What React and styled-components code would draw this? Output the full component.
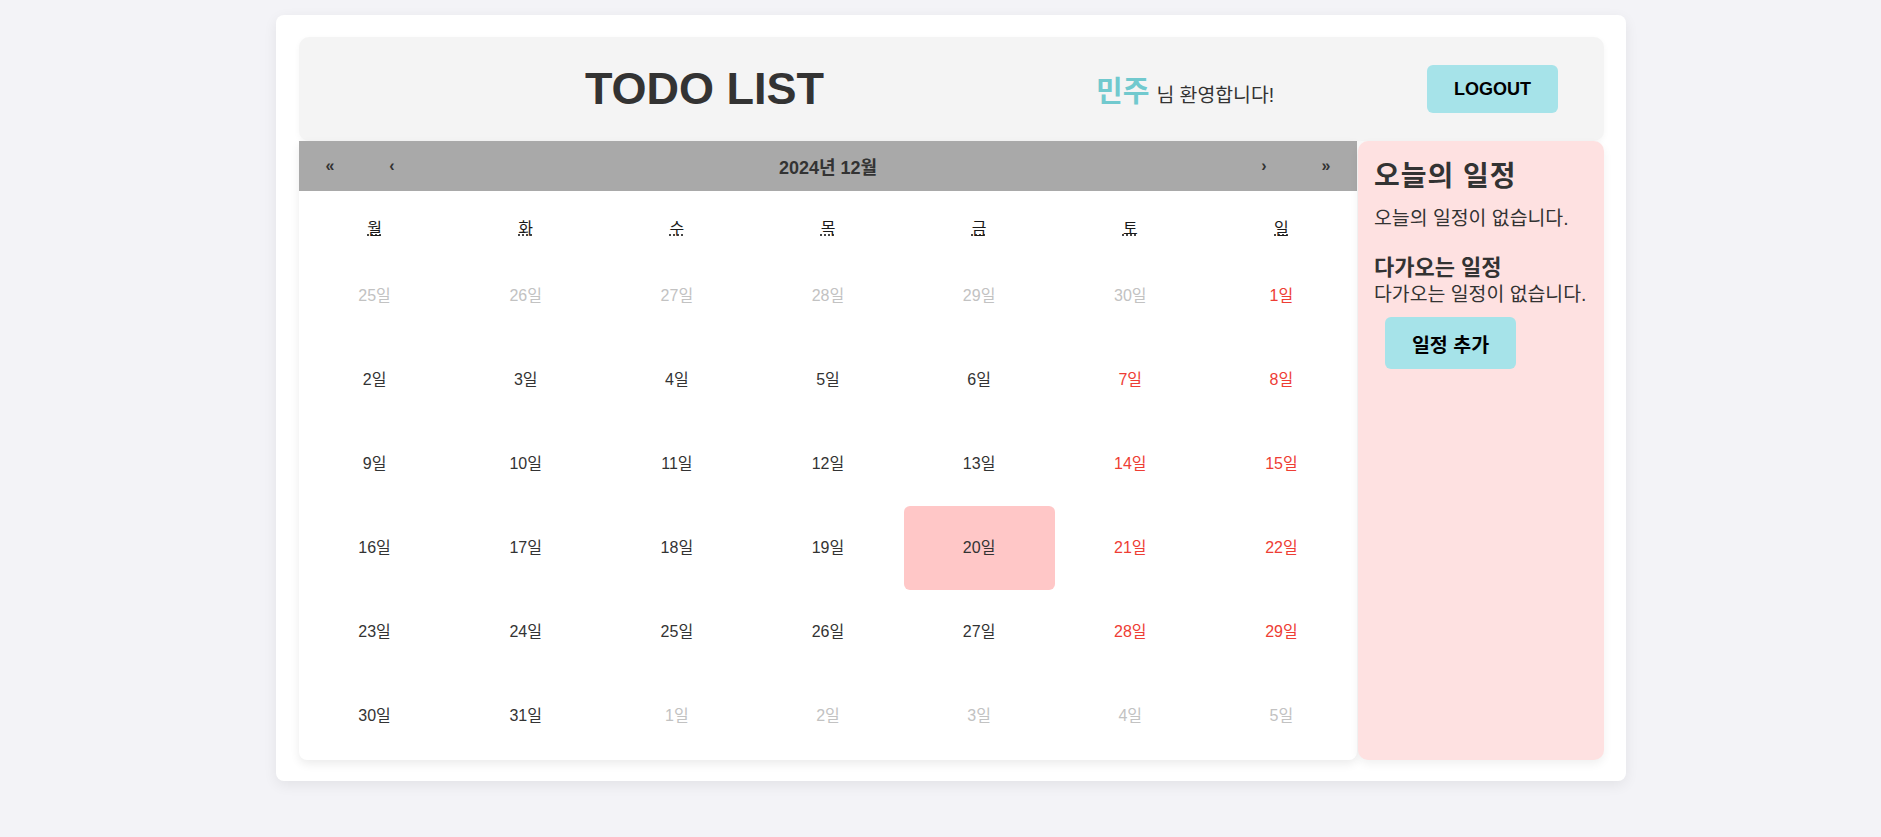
import React from "react";
import styled, { createGlobalStyle } from "styled-components";

const GlobalStyle = createGlobalStyle`
  html, body {
    margin: 0;
    padding: 0;
    background: #f3f3f7;
    font-family: "Liberation Sans", "Noto Sans CJK KR", Arial, sans-serif;
    color: #333;
  }
  * { box-sizing: border-box; }
`;

const Page = styled.div`
  display: flex;
  justify-content: center;
  align-items: flex-start;
  padding: 15px 0 0 21px;
  min-height: 837px;
`;

const Card = styled.div`
  width: 1350px;
  background: #fff;
  border-radius: 8px;
  padding: 22px 22px 21px 23px;
  box-shadow: 0 4px 14px rgba(0, 0, 0, 0.07);
`;

const Header = styled.header`
  height: 104px;
  display: flex;
  align-items: center;
  background: #f4f4f4;
  border-radius: 10px;
  box-shadow: 0 2px 6px rgba(0, 0, 0, 0.04);
`;

const TitleCell = styled.div`
  flex: 0 0 797px;
  padding-left: 14px;
  text-align: center;
`;

const Title = styled.h1`
  margin: 0;
  font-size: 45px;
  font-weight: 700;
  color: #333;
  line-height: 1.1;
`;

const Welcome = styled.div`
  flex: 1;
  display: flex;
  align-items: baseline;
  font-size: 19.4px;
  color: #333;
`;

const Name = styled.span`
  font-size: 29px;
  font-weight: 700;
  color: #71c9ce;
  margin-right: 7px;
`;

const ActionButton = styled.button`
  width: 131px;
  height: ${(p) => p.$h}px;
  border: none;
  border-radius: 6px;
  background: #a6e3e9;
  color: #000;
  font-family: "Liberation Sans", "Noto Sans CJK KR", Arial, sans-serif;
  font-size: ${(p) => p.$fs}px;
  font-weight: 700;
  cursor: pointer;
  padding: 0;
`;

const LogoutButton = styled(ActionButton)`
  margin-right: 46px;
`;

const Body = styled.div`
  display: flex;
  gap: 1px;
  align-items: stretch;
`;

const Calendar = styled.div`
  flex: 0 0 1058px;
  background: #fff;
  border-radius: 0 0 8px 8px;
  box-shadow: 0 4px 10px rgba(0, 0, 0, 0.08);
  padding-bottom: 2px;
  overflow: hidden;
`;

const NavBar = styled.div`
  height: 50px;
  display: flex;
  align-items: center;
  background: #a9a9a9;
`;

const NavButton = styled.button`
  width: 62px;
  height: 50px;
  border: none;
  background: none;
  font-family: "Liberation Sans", Arial, sans-serif;
  font-size: 16px;
  font-weight: 700;
  color: #333;
  padding: 0;
`;

const NavLabel = styled.div`
  flex: 1;
  text-align: center;
  font-size: 18px;
  font-weight: 700;
  color: #333;
`;

const Grid = styled.div`
  display: grid;
  grid-template-columns: repeat(7, 1fr);
`;

const Weekday = styled.div`
  padding: 28px 0 16px;
  text-align: center;
  font-size: 16px;
  line-height: 19px;
`;

const Abbr = styled.abbr`
  text-decoration: underline dotted;
  color: #1a1a1a;
`;

const colors = {
  other: "#c2c2c2",
  weekend: "#ee3d34",
  normal: "#333",
};

const Tile = styled.div`
  height: 84px;
  display: flex;
  align-items: center;
  justify-content: center;
  padding-bottom: 4px;
  font-size: 16px;
  border-radius: 6px;
  color: ${(p) => colors[p.$kind]};
  background: ${(p) => (p.$today ? "#ffc7c7" : "transparent")};
`;

const Sidebar = styled.aside`
  flex: 1;
  background: #fee1e1;
  border-radius: 10px;
  padding: 19px 8px 19px 16px;
  box-shadow: 0 4px 10px rgba(0, 0, 0, 0.06);
`;

const SideTitle = styled.h2`
  margin: 0;
  font-size: 28px;
  line-height: 34px;
  letter-spacing: 1px;
  font-weight: 700;
  color: #333;
  white-space: nowrap;
`;

const SideSub = styled.h3`
  margin: 23px 0 0;
  font-size: 22px;
  line-height: 29px;
  font-weight: 700;
  color: #333;
  white-space: nowrap;
`;

const SideText = styled.p`
  margin: ${(p) => p.$mt}px 0 0;
  font-size: 19.4px;
  line-height: 24px;
  color: #333;
  white-space: nowrap;
`;

const AddButton = styled(ActionButton)`
  display: block;
  margin: 11px 0 0 11px;
`;

const weekdays = ["월", "화", "수", "목", "금", "토", "일"];
const weekdayTitles = ["월요일", "화요일", "수요일", "목요일", "금요일", "토요일", "일요일"];

function buildDays() {
  const days = [];
  for (let d = 25; d <= 30; d++) days.push({ n: d, kind: "other" });
  for (let d = 1; d <= 31; d++) {
    const col = (6 + d - 1) % 7;
    days.push({ n: d, kind: col >= 5 ? "weekend" : "normal", today: d === 20 });
  }
  for (let d = 1; d <= 5; d++) days.push({ n: d, kind: "other" });
  return days;
}

export default function App() {
  const days = buildDays();
  return (
    <>
      <GlobalStyle />
      <Page>
        <Card>
          <Header>
            <TitleCell>
              <Title>TODO LIST</Title>
            </TitleCell>
            <Welcome>
              <Name>민주</Name>
              <span>님 환영합니다!</span>
            </Welcome>
            <LogoutButton $h={48} $fs={18}>LOGOUT</LogoutButton>
          </Header>
          <Body>
            <Calendar>
              <NavBar>
                <NavButton>«</NavButton>
                <NavButton>‹</NavButton>
                <NavLabel>2024년 12월</NavLabel>
                <NavButton>›</NavButton>
                <NavButton>»</NavButton>
              </NavBar>
              <Grid>
                {weekdays.map((w, i) => (
                  <Weekday key={w}>
                    <Abbr title={weekdayTitles[i]}>{w}</Abbr>
                  </Weekday>
                ))}
              </Grid>
              <Grid>
                {days.map((d, i) => (
                  <Tile key={i} $kind={d.kind} $today={d.today}>
                    {d.n}일
                  </Tile>
                ))}
              </Grid>
            </Calendar>
            <Sidebar>
              <SideTitle>오늘의 일정</SideTitle>
              <SideText $mt={12}>오늘의 일정이 없습니다.</SideText>
              <SideSub>다가오는 일정</SideSub>
              <SideText $mt={0}>다가오는 일정이 없습니다.</SideText>
              <AddButton $h={52} $fs={19.5}>일정 추가</AddButton>
            </Sidebar>
          </Body>
        </Card>
      </Page>
    </>
  );
}
